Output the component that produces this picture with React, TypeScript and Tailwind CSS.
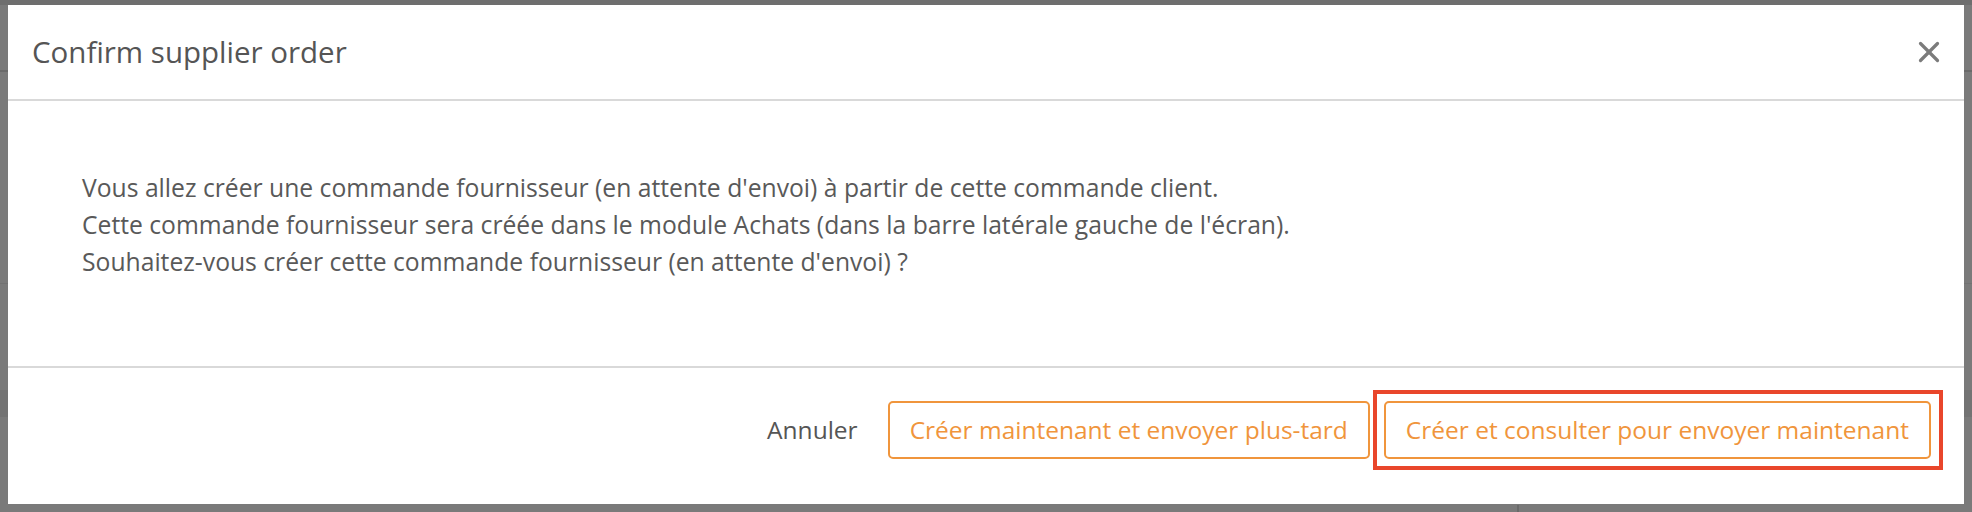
import { X } from 'lucide-react'

const font = { fontFamily: '"Open Sans", Lato, sans-serif' }

function Backdrop() {
  // faint page lying under the overlay
  return (
    <div className="absolute inset-0 bg-[#7a7a7a]">
      <div className="h-[5px] bg-[#6e6e6e]" />
      <div className="absolute left-0 right-0 top-[70px] h-[2px] bg-[#6a6a6a]" />
      <div className="absolute left-0 right-0 top-[283px] h-px bg-[#727272]" />
      <div className="absolute left-0 right-0 top-[390px] h-[27px] bg-[#737373]" />
      <div className="absolute left-[1517px] top-[505px] bottom-0 w-[2px] bg-[#6a6a6a]" />
    </div>
  )
}

export default function App() {
  return (
    <div className="relative w-[1972px] h-[512px] overflow-hidden" style={font}>
      <Backdrop />

      <div className="relative ml-[8px] pt-[5px] w-[1956px]">
        <div className="bg-white h-[499px] flex flex-col">
          <div className="h-[94px] flex items-center justify-between pl-[24px] pr-[18px] border-b-2 border-[#d9d9d9] box-content">
            <h2 className="text-[29.5px] text-[#555555] leading-none">Confirm supplier order</h2>
            <X className="w-[34px] h-[34px] text-[#7b7b7b]" strokeWidth={2.3} />
          </div>

          <div className="h-[265px] pt-[68px] pl-[74px] text-[24.7px] leading-[37px] text-[#595959]">
            <p>Vous allez créer une commande fournisseur (en attente d'envoi) à partir de cette commande client.</p>
            <p>Cette commande fournisseur sera créée dans le module Achats (dans la barre latérale gauche de l'écran).</p>
            <p>Souhaitez-vous créer cette commande fournisseur (en attente d'envoi) ?</p>
          </div>

          <div className="flex-1 border-t-2 border-[#d9d9d9] flex justify-end items-start pt-[33px] pr-[33px] gap-[14px]">
            <button className="h-[58px] px-[16px] text-[24.5px] text-[#555555]">Annuler</button>
            <button className="h-[58px] px-[20px] border-2 border-[#f0953c] rounded-[5px] text-[24.5px] text-[#f0953c]">
              Créer maintenant et envoyer plus-tard
            </button>
            <div className="relative">
              <button className="h-[58px] px-[20px] border-2 border-[#f0953c] rounded-[5px] text-[24.5px] text-[#f0953c]">
                Créer et consulter pour envoyer maintenant
              </button>
              <div className="absolute -top-[11px] -bottom-[11px] -left-[11px] -right-[12px] border-4 border-[#e9462b] pointer-events-none" />
            </div>
          </div>
        </div>
      </div>
    </div>
  )
}
